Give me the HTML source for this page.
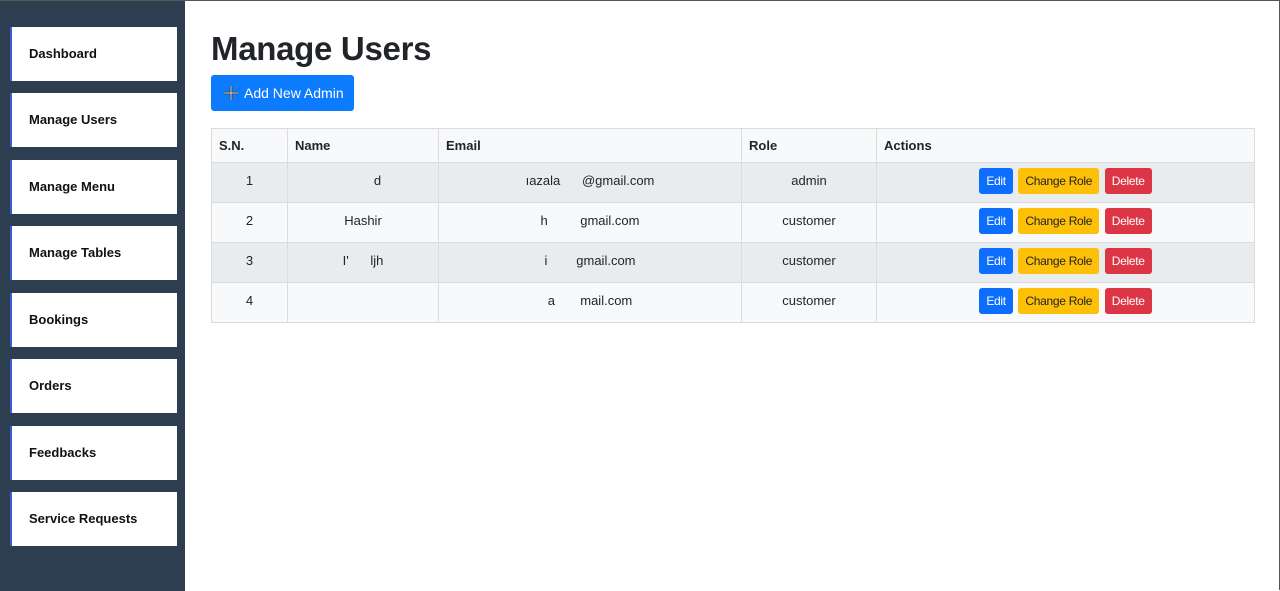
<!DOCTYPE html>
<html><head><meta charset="utf-8"><style>
*{box-sizing:border-box;margin:0;padding:0}
body{width:1280px;height:590px;overflow:hidden;background:#fff;font-family:"Liberation Sans",sans-serif;color:#212529;position:relative;border-top:1px solid #555;border-right:1px solid #555}
.sb{position:absolute;left:0;top:0;width:185px;height:590px;background:#2c3e50}
.it{position:absolute;left:10px;width:167px;height:54px;background:#fff;border-left:2px solid #3b5bdb;font-weight:bold;font-size:13px;padding-left:17px;line-height:54px;color:#111}
h1{position:absolute;left:211px;top:29px;font-size:33px;font-weight:600;color:#212529;letter-spacing:-0.3px}
.add{position:absolute;left:211px;top:74px;width:143px;height:36px;background:#0d7bfd;border-radius:3px;color:#fff;font-size:14px;line-height:36px;padding-left:33px}
.add svg{position:absolute;left:12px;top:10px}
table{position:absolute;left:211px;top:127px;width:1044px;border-collapse:collapse;font-size:13px}
td,th{border:1px solid #dcdcdc;height:40px}
th{height:34px;text-align:left;padding-left:7px;background:#f8f9fa;font-weight:bold}
td{text-align:center;padding-bottom:4px}
tr.o td{background:#e9ecef}
tr.e td{background:#f8f9fa}
.b{display:inline-block;height:26px;line-height:26px;font-size:12px;border-radius:3px;padding:0 7px;margin:0 1px;color:#fff;vertical-align:middle;letter-spacing:-0.3px}
</style></head><body>
<div class="sb">
<div class="it" style="top:26px">Dashboard</div>
<div class="it" style="top:92px">Manage Users</div>
<div class="it" style="top:159px">Manage Menu</div>
<div class="it" style="top:225px">Manage Tables</div>
<div class="it" style="top:292px">Bookings</div>
<div class="it" style="top:358px">Orders</div>
<div class="it" style="top:425px">Feedbacks</div>
<div class="it" style="top:491px">Service Requests</div>
</div>
<h1>Manage Users</h1>
<div class="add"><svg width="16" height="16" viewBox="0 0 16 16"><path d="M8 1v14M1 8h14" stroke="#333" stroke-width="2.5"/><path d="M8 1v14M1 8h14" stroke="#ddd" stroke-width="1"/></svg>Add New Admin</div>
<table>
<tr><th style="width:76px">S.N.</th><th style="width:151px">Name</th><th style="width:303px">Email</th><th style="width:135px">Role</th><th>Actions</th></tr>
<tr class="o"><td>1</td><td>&nbsp;&nbsp;&nbsp;&nbsp;&nbsp;&nbsp;&nbsp;&nbsp;d</td><td>ıazala&nbsp;&nbsp;&nbsp;&nbsp;&nbsp;&nbsp;@gmail.com</td><td>admin</td><td><span class="b" style="background:#0d6efd">Edit</span> <span class="b" style="background:#ffc107;color:#222">Change Role</span> <span class="b" style="background:#dc3545">Delete</span></td></tr>
<tr class="e"><td>2</td><td>Hashir</td><td>h&nbsp;&nbsp;&nbsp;&nbsp;&nbsp;&nbsp;&nbsp;&nbsp;&nbsp;gmail.com</td><td>customer</td><td><span class="b" style="background:#0d6efd">Edit</span> <span class="b" style="background:#ffc107;color:#222">Change Role</span> <span class="b" style="background:#dc3545">Delete</span></td></tr>
<tr class="o"><td>3</td><td>I'&nbsp;&nbsp;&nbsp;&nbsp;&nbsp;&nbsp;ljh</td><td>i&nbsp;&nbsp;&nbsp;&nbsp;&nbsp;&nbsp;&nbsp;&nbsp;gmail.com</td><td>customer</td><td><span class="b" style="background:#0d6efd">Edit</span> <span class="b" style="background:#ffc107;color:#222">Change Role</span> <span class="b" style="background:#dc3545">Delete</span></td></tr>
<tr class="e"><td>4</td><td>&nbsp;</td><td>a&nbsp;&nbsp;&nbsp;&nbsp;&nbsp;&nbsp;&nbsp;mail.com</td><td>customer</td><td><span class="b" style="background:#0d6efd">Edit</span> <span class="b" style="background:#ffc107;color:#222">Change Role</span> <span class="b" style="background:#dc3545">Delete</span></td></tr>
</table>
</body></html>
